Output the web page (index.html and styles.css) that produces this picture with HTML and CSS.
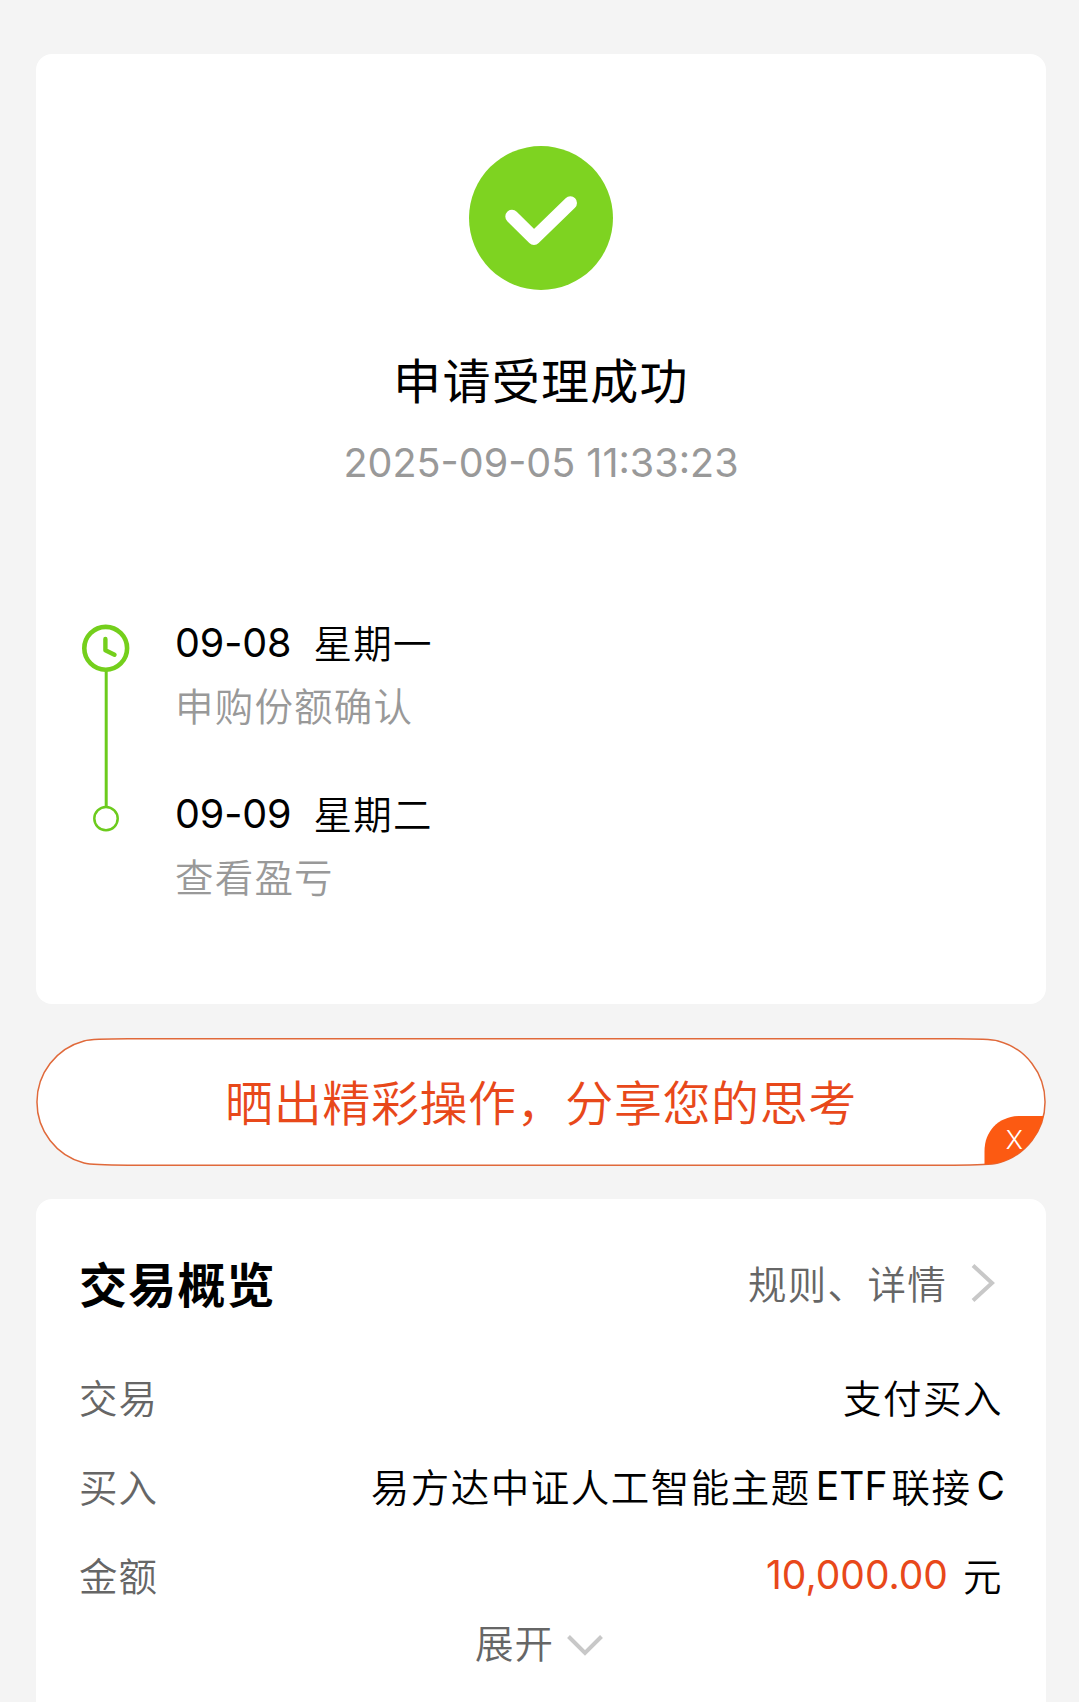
FILE: index.html
```html
<!DOCTYPE html>
<html lang="zh-CN">
<head>
    <meta charset="UTF-8">
    <meta name="viewport" content="width=device-width, initial-scale=1.0">
    <title>申请受理成功</title>
    <link rel="stylesheet" href="styles.css">
</head>
<body>
    <div class="container">
        <div class="card result">
            <svg class="result-icon" viewBox="0 0 144 144">
                <circle cx="72" cy="72" r="72" fill="#7ed321"/>
                <path d="M43 70.5L65 92.3L101.3 57" fill="none" stroke="#fff" stroke-width="13.4" stroke-linecap="round" stroke-linejoin="round"/>
            </svg>
            <h1>申请受理成功</h1>
            <p class="result-time">2025-09-05 11:33:23</p>

            <div class="timeline">
                <svg class="timeline-track" viewBox="0 0 48 210">
                    <path d="M24.2 46V182" stroke="#6ccb1d" stroke-width="3"/>
                    <circle cx="23.7" cy="24.3" r="21.4" fill="none" stroke="#74cf1c" stroke-width="4.6"/>
                    <path d="M23.4 15V26.3L32.5 30.8" fill="none" stroke="#74cf1c" stroke-width="4.4" stroke-linecap="round" stroke-linejoin="round"/>
                    <circle cx="24" cy="194.6" r="11.7" fill="#fff" stroke="#6ccb1d" stroke-width="2.5"/>
                </svg>
                <div class="timeline-list">
                    <div class="timeline-item">
                        <div class="timeline-date"><span class="num">09-08</span>星期一</div>
                        <div class="timeline-desc">申购份额确认</div>
                    </div>
                    <div class="timeline-item">
                        <div class="timeline-date"><span class="num">09-09</span>星期二</div>
                        <div class="timeline-desc">查看盈亏</div>
                    </div>
                </div>
            </div>
        </div>

        <div class="share">
            <svg class="share-shape" viewBox="0 0 1010 128">
                <path d="M92 .8H918C938 .8 954 .8 962 2.9A63.2 63.2 0 0 1 962 125.1C954 127.2 938 127.2 918 127.2H92C72 127.2 56 127.2 48 125.1A63.2 63.2 0 0 1 48 2.9C56 .8 72 .8 92 .8Z" fill="#fff" stroke="#e0693a" stroke-width="1.5"/>
                <path d="M948.5 126.5V113C948.5 93 963 78 984 78H1007.6A63.2 63.2 0 0 1 962 125.1Q956 126.5 948.5 126.5Z" fill="#fc5a12"/>
            </svg>
            <span class="share-text">晒出精彩操作，分享您的思考</span>
            <span class="share-close">X</span>
        </div>

        <div class="card overview">
            <div class="overview-head">
                <h2>交易概览</h2>
                <div class="overview-link">
                    <span>规则、详情</span>
                    <svg class="arrow-right" viewBox="0 0 24 38">
                        <path d="M2 1.5L21 19L2 36.5" fill="none" stroke="#c8c8c8" stroke-width="4"/>
                    </svg>
                </div>
            </div>
            <div class="row">
                <span class="label">交易</span>
                <span class="value">支付买入</span>
            </div>
            <div class="row">
                <span class="label">买入</span>
                <span class="value">易方达中证人工智能主题<span class="latin">ETF</span>联接<span class="latin last">C</span></span>
            </div>
            <div class="row">
                <span class="label">金额</span>
                <span class="value"><span class="amount">10,000.00</span>元</span>
            </div>
            <div class="expand">
                <span>展开</span>
                <svg class="arrow-down" viewBox="0 0 36 21">
                    <path d="M1.5 1.5L18 18L34.5 1.5" fill="none" stroke="#c8c8c8" stroke-width="4"/>
                </svg>
            </div>
        </div>
    </div>
</body>
</html>
```

FILE: styles.css
```css
* {
    box-sizing: border-box;
}
body {
    margin: 0;
    background-color: #f4f4f4;
    color: #000;
    font-family: "Noto Sans CJK SC", sans-serif;
    font-size: 38.5px;
    font-weight: 350;
    overflow: hidden;
}
h1, h2, p {
    margin: 0;
}
.container {
    height: 1702px;
    padding: 54px 33px 0 36px;
    overflow: hidden;
}
.card {
    background: #fff;
    border-radius: 16px;
}
.result {
    height: 950px;
    padding-top: 92px;
    text-align: center;
}
.result-icon {
    display: block;
    width: 144px;
    height: 144px;
    margin: 0 auto;
}
h1 {
    margin-top: 58px;
    font-size: 48px;
    font-weight: 400;
    line-height: 60px;
    letter-spacing: 1.3px;
}
.result-time {
    margin-top: 25px;
    color: #999;
    font-family: Inter, sans-serif;
    font-size: 39.5px;
    font-weight: 400;
    line-height: 60px;
}
.timeline {
    display: flex;
    gap: 45px;
    margin-top: 131px;
    padding-left: 46px;
    text-align: left;
}
.timeline-track {
    width: 48px;
    height: 210px;
}
.timeline-item {
    height: 170.5px;
    margin-top: -14px;
    margin-bottom: 14px;
}
.timeline-date, .timeline-desc {
    height: 63px;
    line-height: 63px;
    letter-spacing: 1.2px;
}
.timeline-date {
    display: flex;
}
.timeline-desc {
    color: #999;
}
.num {
    width: 138.5px;
    padding-top: 2px;
    font-family: Inter, sans-serif;
    font-size: 39.5px;
    font-weight: 400;
    letter-spacing: -0.1px;
}
.share {
    position: relative;
    height: 128px;
    margin: 34px 0 33px;
    text-align: center;
}
.share-shape {
    position: absolute;
    top: 0;
    left: 0;
    width: 1010px;
    height: 128px;
}
.share-text {
    position: relative;
    display: block;
    color: #e8481a;
    font-size: 48px;
    line-height: 125px;
    letter-spacing: 0.6px;
}
.share-close {
    position: absolute;
    right: 23px;
    bottom: 10px;
    color: #fff;
    font-family: Inter, sans-serif;
    font-size: 26px;
    font-weight: 300;
    line-height: 32px;
}
.overview {
    height: 560px;
    padding: 53px 43px 0;
}
.overview-head, .overview-link, .row {
    display: flex;
    align-items: center;
    justify-content: space-between;
}
.overview-head {
    height: 60px;
    margin-bottom: 39px;
    padding-right: 8px;
}
h2 {
    font-size: 48px;
    font-weight: 700;
    line-height: 60px;
    letter-spacing: 1.2px;
}
.overview-link {
    gap: 24px;
    color: #666;
    letter-spacing: 1.3px;
}
.arrow-right {
    width: 24px;
    height: 38px;
    margin-top: 2px;
}
.row {
    height: 89px;
    letter-spacing: 1.5px;
}
.label {
    color: #666;
    letter-spacing: 1px;
}
.value {
    display: flex;
    align-items: center;
}
.latin {
    margin: 2px 4px 0 5px;
    font-family: Inter, sans-serif;
    font-size: 39px;
    font-weight: 400;
    letter-spacing: 0;
}
.last {
    margin-right: -2px;
}
.amount {
    margin: 2px 15px 0 0;
    color: #e8481a;
    font-family: Inter, sans-serif;
    font-size: 39px;
    font-weight: 400;
    letter-spacing: 0;
}
.expand {
    display: flex;
    align-items: center;
    justify-content: center;
    gap: 13px;
    height: 46px;
    padding-right: 4px;
    color: #666;
    letter-spacing: 0.9px;
}
.arrow-down {
    width: 36px;
    height: 21px;
    margin-top: 8px;
}
```
